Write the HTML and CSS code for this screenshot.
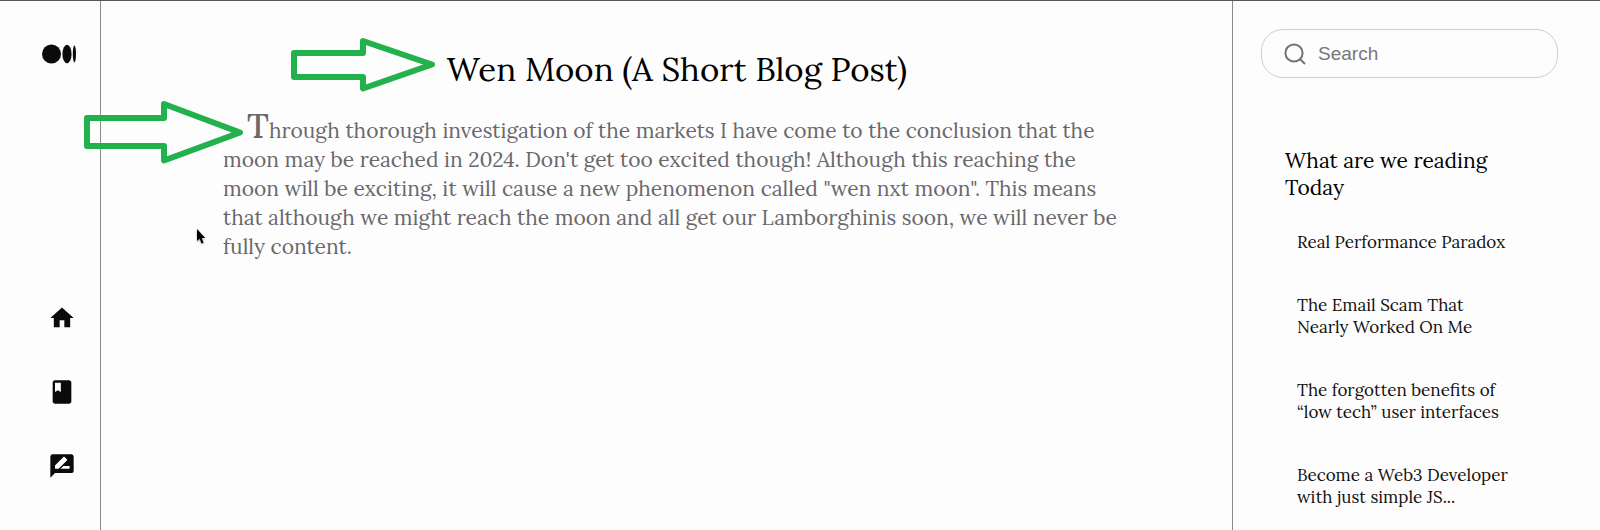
FILE: index.html
```html
<!DOCTYPE html>
<html lang="en">
<head>
<meta charset="utf-8">
<title>Wen Moon (A Short Blog Post)</title>
<link rel="stylesheet" href="styles.css">
</head>
<body>
<div class="page">
  <nav class="rail" aria-label="Main">
    <a class="rail-logo" href="#" aria-label="Medium">
      <svg width="34" height="20" viewBox="0 0 34 20"><ellipse cx="9.5" cy="10" rx="9.5" ry="9.5"/><ellipse cx="25" cy="10" rx="4.6" ry="9.2"/><ellipse cx="32.4" cy="10" rx="1.6" ry="8.4"/></svg>
    </a>
    <div class="rail-links">
      <a href="#" aria-label="Home"><svg class="icon" viewBox="0 0 24 24"><path d="M10 20v-6h4v6h5v-8h3L12 3 2 12h3v8z"/></svg></a>
      <a href="#" aria-label="Library"><svg class="icon" viewBox="0 0 24 24"><path d="M18 2H6c-1.100 0-2 .9-2 2v16c0 1.100.9 2 2 2h12c1.100 0 2-.9 2-2V4c0-1.100-.9-2-2-2zM6 4h5v8l-2.500-1.500L6 12V4z"/></svg></a>
      <a href="#" aria-label="Write"><svg class="icon" viewBox="0 0 24 24"><path d="M20 2H4c-1.100 0-1.990.9-1.990 2L2 22l4-4h14c1.100 0 2-.9 2-2V4c0-1.100-.9-2-2-2zM6 14.400v-2.900l7.200-7.200c.3-.3.700-.3 1 0l2 2c.3.3.3.700 0 1L9.100 14.400H6zm12.500 0h-7.800l2.500-2.500h5.300v2.500z"/></svg></a>
    </div>
  </nav>

  <main class="article">
    <h1>Wen Moon (A Short Blog Post)</h1>
    <p><span class="initial">T</span>hrough thorough investigation of the markets I have come to the conclusion that the<br>
    moon may be reached in 2024. Don't get too excited though! Although this reaching the<br>
    moon will be exciting, it will cause a new phenomenon called "wen nxt moon". This means<br>
    that although we might reach the moon and all get our Lamborghinis soon, we will never be<br>
    fully content.</p>
  </main>

  <aside class="side">
    <label class="search">
      <svg width="22" height="22" viewBox="0 0 22 22"><circle cx="10" cy="10" r="8.600"/><path d="M16.200 16.200L21 21"/></svg>
      <input type="search" placeholder="Search" aria-label="Search">
    </label>
    <section class="reading">
      <h2>What are we reading<br>Today</h2>
      <ul>
        <li><a href="#">Real Performance Paradox</a></li>
        <li><a href="#">The Email Scam That<br>Nearly Worked On Me</a></li>
        <li><a href="#">The forgotten benefits of<br>“low tech” user interfaces</a></li>
        <li><a href="#">Become a Web3 Developer<br>with just simple JS...</a></li>
      </ul>
    </section>
  </aside>

  <svg class="marks" width="450" height="180" viewBox="0 0 450 180" aria-hidden="true">
    <path class="arrow" d="M294 53H363V41L432 64.500L363 88.500V77H294Z"/>
    <path class="arrow" d="M87 118H164V104L240 132.500L164 160.500V146H87Z"/>
  </svg>
  <svg class="cursor" width="12" height="18" viewBox="0 0 12 18" aria-hidden="true"><path d="M1 1V13L3.600 10.800L5.600 15.600L7.600 14.700L5.600 10H9.200Z"/></svg>
</div>
</body>
</html>
```
FILE: styles.css
```css
* { box-sizing: border-box; }
body {
  margin: 0;
  background: #fefdfe;
  color: #111;
  font-family: Lora, "Liberation Serif", serif;
}
a { color: inherit; text-decoration: none; }
.page {
  position: relative;
  display: grid;
  grid-template-columns: 101px 1fr 368px;
  min-height: 100vh;
  border-top: 1px solid #56545a;
}
.rail {
  display: flex;
  flex-direction: column;
  justify-content: space-between;
  padding: 43px 24px 50px 42px;
  border-right: 1px solid #8a898c;
}
.rail a { display: block; }
.rail svg { display: block; fill: #0b0a0c; }
.rail-links {
  display: flex;
  flex-direction: column;
  gap: 46px;
  padding-left: 6px;
}
.rail .icon { width: 28px; height: 28px; }
.article { padding: 47px 101px 32px 122px; }
h1 {
  margin: 0 0 26px;
  font-size: 33px;
  font-weight: 400;
  line-height: 42px;
  color: #000;
  text-align: center;
}
p {
  margin: 0;
  font-size: 21px;
  line-height: 29px;
  color: #69686b;
}
.initial {
  margin-left: 24px;
  font-size: 34px;
  font-weight: 500;
  line-height: 0;
}
.side {
  padding: 28px 42px 20px 28px;
  border-left: 1px solid #8a898c;
}
.search {
  display: flex;
  align-items: center;
  gap: 12px;
  height: 49px;
  padding: 0 22px;
  border: 1px solid #ccd0d0;
  border-radius: 22px;
}
.search svg { flex: none; fill: none; stroke: #737278; stroke-width: 2; }
.search input {
  flex: 1;
  min-width: 0;
  padding: 0;
  border: 0;
  outline: 0;
  background: none;
  font: 19px "Liberation Sans", Arial, sans-serif;
  color: #333;
}
.search input::placeholder { color: #77767c; opacity: 1; }
.reading { padding: 69px 0 0 24px; }
h2 {
  margin: 0 0 30px;
  font-size: 21px;
  font-weight: 400;
  line-height: 27px;
  color: #000;
}
ul {
  display: grid;
  gap: 41px;
  margin: 0;
  padding: 0 0 0 12px;
  list-style: none;
  font-size: 17px;
  line-height: 22px;
}
.marks {
  position: absolute;
  top: -1px;
  left: 0;
  pointer-events: none;
}
.arrow {
  fill: none;
  stroke: #22b14c;
  stroke-width: 6;
  stroke-linejoin: round;
}
.cursor {
  position: absolute;
  top: 227px;
  left: 196px;
  fill: #000;
  filter: drop-shadow(0 1px 1px #0005);
}
```
